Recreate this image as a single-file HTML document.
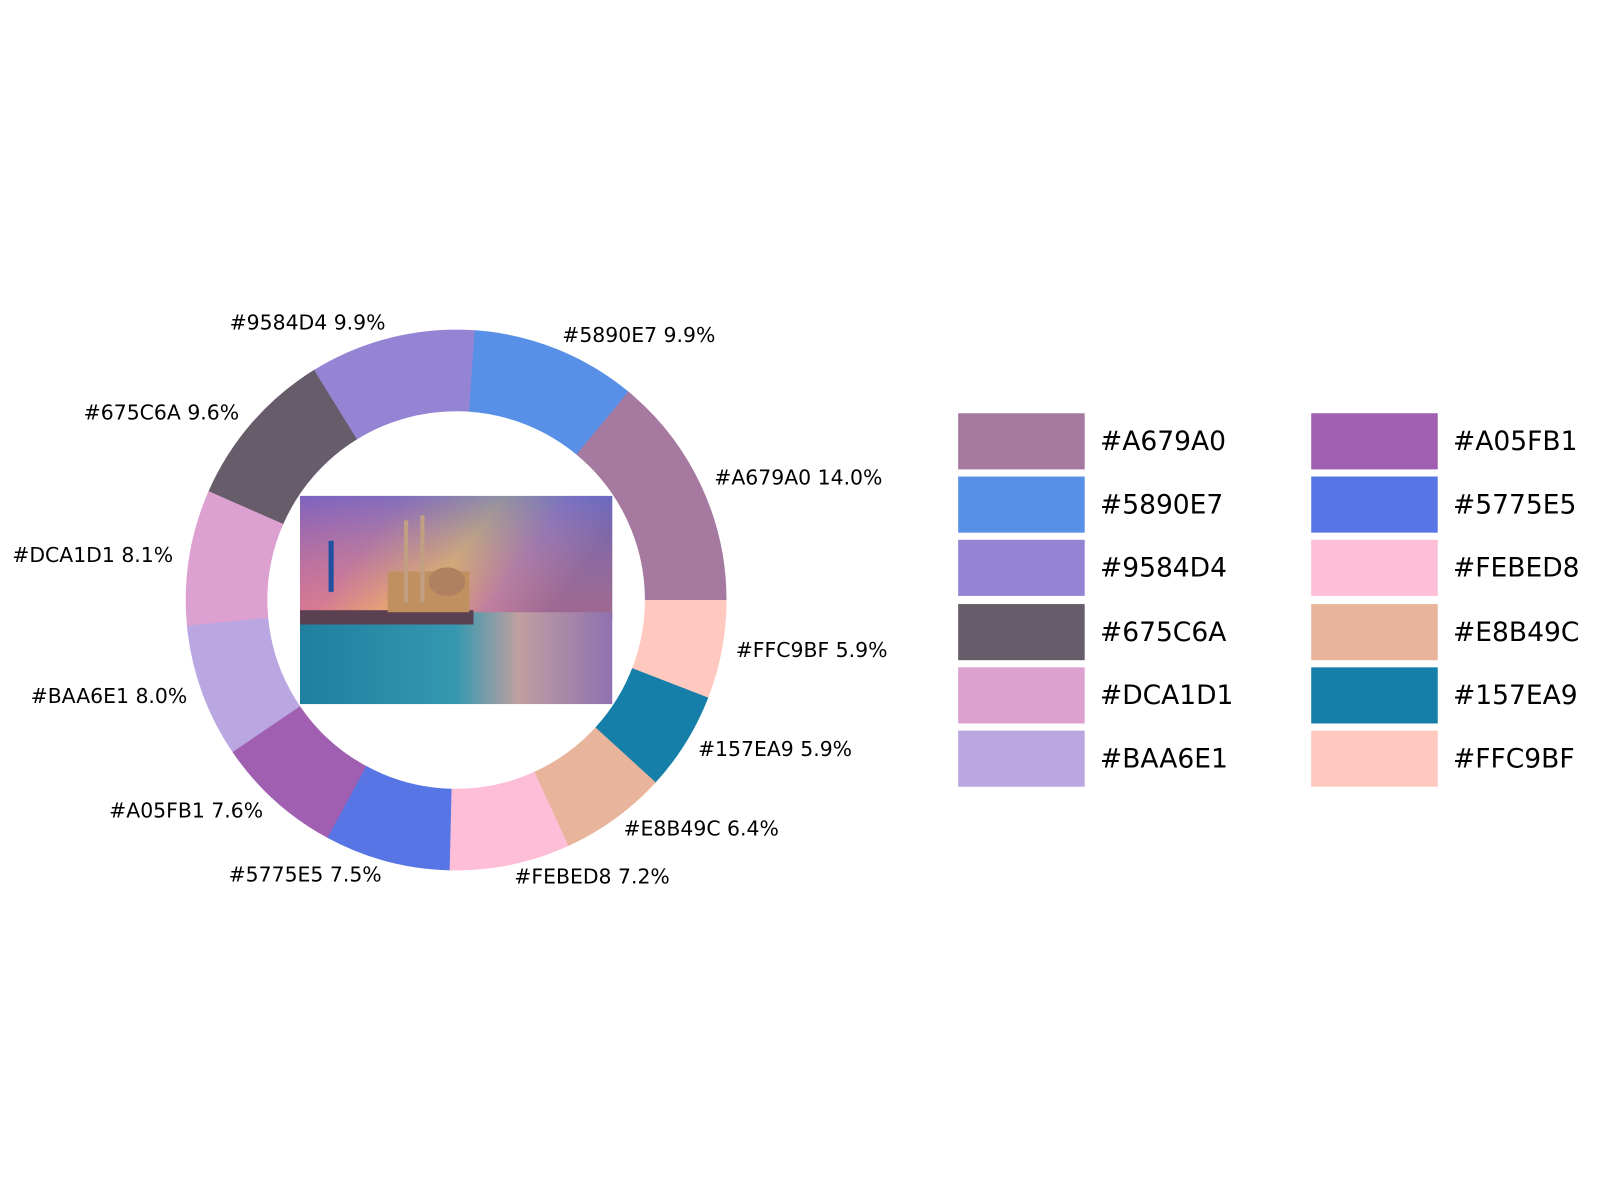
<!DOCTYPE html>
<html><head><meta charset="utf-8"><style>
html,body{margin:0;padding:0;background:#fff;width:1600px;height:1200px;overflow:hidden}
svg text{font-family:"DejaVu Sans","Liberation Sans",sans-serif}
</style></head><body>
<svg width="1600" height="1200" viewBox="0 0 1600 1200" xmlns="http://www.w3.org/2000/svg">
<defs>
<linearGradient id="sky" x1="0" y1="0" x2="1" y2="0.3">
<stop offset="0" stop-color="#c24fa8"/><stop offset="0.3" stop-color="#d06aa0"/><stop offset="0.6" stop-color="#f0c060"/><stop offset="0.8" stop-color="#b070b0"/><stop offset="1" stop-color="#7a50a0"/>
</linearGradient>
<linearGradient id="sky2" x1="0" y1="0" x2="0" y2="1">
<stop offset="0" stop-color="#5070d0" stop-opacity="0.6"/><stop offset="1" stop-color="#f0a070" stop-opacity="0.3"/>
</linearGradient>
<linearGradient id="water" x1="0" y1="0" x2="1" y2="0">
<stop offset="0" stop-color="#1f7f9f"/><stop offset="0.5" stop-color="#3598b0"/><stop offset="0.7" stop-color="#c0a0a0"/><stop offset="1" stop-color="#9070b0"/>
</linearGradient>
</defs>
<g transform="scale(1.0204)">
<g transform="translate(447,588) scale(1,-1)" fill="none" stroke-width="80">
<circle r="225" stroke="#A679A0" stroke-dasharray="198.5 1500" stroke-dashoffset="0"/>
<circle r="225" stroke="#5890E7" stroke-dasharray="140.5 1500" stroke-dashoffset="-197.92"/>
<circle r="225" stroke="#9584D4" stroke-dasharray="140.5 1500" stroke-dashoffset="-337.88"/>
<circle r="225" stroke="#675C6A" stroke-dasharray="136.3 1500" stroke-dashoffset="-477.84"/>
<circle r="225" stroke="#DCA1D1" stroke-dasharray="115.1 1500" stroke-dashoffset="-613.55"/>
<circle r="225" stroke="#BAA6E1" stroke-dasharray="113.7 1500" stroke-dashoffset="-728.07"/>
<circle r="225" stroke="#A05FB1" stroke-dasharray="108 1500" stroke-dashoffset="-841.16"/>
<circle r="225" stroke="#5775E5" stroke-dasharray="106.6 1500" stroke-dashoffset="-948.61"/>
<circle r="225" stroke="#FEBED8" stroke-dasharray="102.4 1500" stroke-dashoffset="-1054.64"/>
<circle r="225" stroke="#E8B49C" stroke-dasharray="91 1500" stroke-dashoffset="-1156.42"/>
<circle r="225" stroke="#157EA9" stroke-dasharray="84 1500" stroke-dashoffset="-1246.90"/>
<circle r="225" stroke="#FFC9BF" stroke-dasharray="84 1500" stroke-dashoffset="-1330.31"/>
</g>
<rect x="294" y="486" width="306" height="120" fill="url(#sky)"/>
<rect x="294" y="486" width="306" height="120" fill="url(#sky2)"/>
<rect x="294" y="600" width="306" height="90" fill="url(#water)"/>
<rect x="294" y="598" width="170" height="14" fill="#5a4050"/>
<rect x="380" y="560" width="80" height="40" fill="#c09060"/>
<ellipse cx="438" cy="570" rx="18" ry="14" fill="#b08060"/>
<rect x="396" y="510" width="4" height="80" fill="#c0a080"/>
<rect x="412" y="505" width="4" height="85" fill="#c0a080"/>
<rect x="322" y="530" width="5" height="50" fill="#2050a0"/>
<g font-size="20" fill="#000">
<text x="225" y="323">#9584D4 9.9%</text>
<text x="551" y="335">#5890E7 9.9%</text>
<text x="82" y="411">#675C6A 9.6%</text>
<text x="700" y="475">#A679A0 14.0%</text>
<text x="12" y="551">#DCA1D1 8.1%</text>
<text x="721" y="644">#FFC9BF 5.9%</text>
<text x="30" y="689">#BAA6E1 8.0%</text>
<text x="684" y="741">#157EA9 5.9%</text>
<text x="107" y="801">#A05FB1 7.6%</text>
<text x="611" y="819">#E8B49C 6.4%</text>
<text x="224" y="864">#5775E5 7.5%</text>
<text x="504" y="866">#FEBED8 7.2%</text>
</g>
<g>
<rect x="939" y="405" width="124" height="55" fill="#A679A0"/>
<rect x="939" y="467" width="124" height="55" fill="#5890E7"/>
<rect x="939" y="529" width="124" height="55" fill="#9584D4"/>
<rect x="939" y="592" width="124" height="55" fill="#675C6A"/>
<rect x="939" y="654" width="124" height="55" fill="#DCA1D1"/>
<rect x="939" y="716" width="124" height="55" fill="#BAA6E1"/>
<rect x="1285" y="405" width="124" height="55" fill="#A05FB1"/>
<rect x="1285" y="467" width="124" height="55" fill="#5775E5"/>
<rect x="1285" y="529" width="124" height="55" fill="#FEBED8"/>
<rect x="1285" y="592" width="124" height="55" fill="#E8B49C"/>
<rect x="1285" y="654" width="124" height="55" fill="#157EA9"/>
<rect x="1285" y="716" width="124" height="55" fill="#FFC9BF"/>
</g>
<g font-size="26" fill="#000">
<text x="1078" y="441">#A679A0</text>
<text x="1078" y="503">#5890E7</text>
<text x="1078" y="565">#9584D4</text>
<text x="1078" y="628">#675C6A</text>
<text x="1078" y="690">#DCA1D1</text>
<text x="1078" y="752">#BAA6E1</text>
<text x="1424" y="441">#A05FB1</text>
<text x="1424" y="503">#5775E5</text>
<text x="1424" y="565">#FEBED8</text>
<text x="1424" y="628">#E8B49C</text>
<text x="1424" y="690">#157EA9</text>
<text x="1424" y="752">#FFC9BF</text>
</g>
</g>
</svg>
</body></html>
